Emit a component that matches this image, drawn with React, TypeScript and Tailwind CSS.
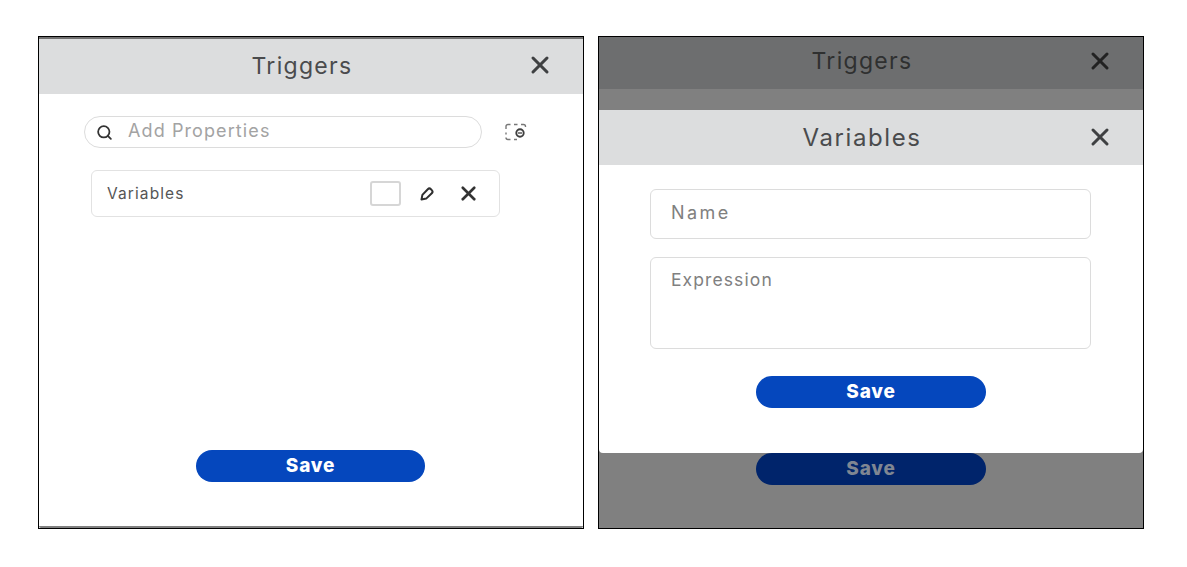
import { Search, X } from "lucide-react";

const font = { fontFamily: "Inter, 'Noto Sans', sans-serif" };

function ScanIcon() {
  return (
    <svg width="24" height="18" viewBox="0 0 24 18" fill="none">
      <path d="M2 6V3.500A2 2 0 0 1 4 1.500h2.500M10 1.500h3.500M17 1.500h2.500a2 2 0 0 1 2 2V4M2 9.500v2M2 14.500a2 2 0 0 0 2 2h2.500M10 16.500h3" stroke="#777" strokeWidth="1.400" />
      <circle cx="16" cy="10" r="3.700" stroke="#3f3f3f" strokeWidth="1.900" />
      <path d="M14 10h4" stroke="#3f3f3f" strokeWidth="1.300" />
    </svg>
  );
}

function PencilIcon() {
  return (
    <svg width="15" height="15" viewBox="0 0 15 15" fill="none">
      <path d="M1.500 13.500l.9-4.600 5.400-5.700a2.200 2.200 0 0 1 3.100 0l.9.900a2.200 2.200 0 0 1 0 3.100l-5.600 5.400-4.700.9z" stroke="#2f2f2f" strokeWidth="2" strokeLinejoin="round" />
    </svg>
  );
}

function Header({ title, dark, wide }: { title: string; dark?: boolean; wide?: boolean }) {
  return (
    <div className={`relative flex items-center justify-center pr-[18px] ${dark ? "h-[52px] bg-[#6d6e6f] pb-[4px]" : "h-[55px] bg-[#dcddde]"}`}>
      <span className={`${wide ? "text-[24px] tracking-[1.6px]" : "text-[23px] tracking-[1.3px]"} ${dark ? "text-[#2f3030]" : "text-[#4a4b4d]"}`}>{title}</span>
      <X className={`absolute right-[29px] ${dark ? "text-[#222] top-[10px]" : wide ? "top-[13px] text-[#3f4042]" : "top-[12px] text-[#3f4042]"}`} size={28} strokeWidth={2.6} />
    </div>
  );
}

export default function App() {
  return (
    <div className="flex h-[567px] w-[1187px] gap-[14px] bg-white pl-[38px] pt-[36px]" style={font}>
      {/* left panel */}
      <div className="flex h-[493px] w-[546px] flex-col border border-black bg-white">
        <div className="h-[2px] bg-[#707070]" />
        <Header title="Triggers" />
        <div className="flex items-center pl-[45px] pt-[22px]">
          <div className="flex h-[32px] w-[398px] items-center rounded-full border border-[#dcdcdc] pl-[11px]">
            <Search size={17} strokeWidth={2.5} className="text-[#333]" />
            <span className="ml-[15px] pb-[3px] text-[18px] tracking-[1.1px] text-[#a3a3a3]">Add Properties</span>
          </div>
          <div className="ml-[22px]">
            <ScanIcon />
          </div>
        </div>
        <div className="ml-[52px] mt-[22px] flex h-[47px] w-[409px] items-center rounded-[6px] border border-[#e2e2e2] pl-[15px]">
          <span className="w-[263px] text-[15.500px] tracking-[1.100px] text-[#555]">Variables</span>
          <div className="h-[25px] w-[31px] rounded-[3px] border-2 border-[#d6d6d6]" />
          <div className="ml-[19px]">
            <PencilIcon />
          </div>
          <X className="ml-[22px] text-[#333]" size={23} strokeWidth={2.8} />
        </div>
        <div className="ml-[157px] mt-[233px] flex h-[32px] w-[229px] items-center justify-center rounded-full bg-[#0547bd] pt-[1px] text-[19px] font-extrabold tracking-[0.8px] text-white">
          Save
        </div>
        <div className="mt-auto h-[2px] rounded-b-[3px] bg-[#808080]" />
      </div>

      {/* right panel */}
      <div className="relative flex h-[493px] w-[546px] flex-col border border-black bg-[#808080]">
        <Header title="Triggers" dark />
        <div className="ml-[157px] mt-[364px] flex h-[32px] w-[230px] items-center justify-center rounded-full bg-[#00246b] pt-[1px] text-[19px] font-extrabold tracking-[0.8px] text-[#7f8692]">
          Save
        </div>
        {/* modal over the dimmed panel */}
        <div className="absolute left-0 right-0 top-[73px] h-[343px] rounded-b-[4px] bg-white">
          <Header title="Variables" wide />
          <div className="flex flex-col items-start pl-[51px] pt-[24px]">
            <div className="flex h-[50px] w-[441px] items-center rounded-[6px] border border-[#dcdcdc] pb-[4px] pl-[20px] text-[18px] tracking-[2.400px] text-[#808080]">
              Name
            </div>
            <div className="mt-[18px] h-[92px] w-[441px] rounded-[6px] border border-[#dcdcdc] pl-[20px] pt-[9px] text-[17.500px] tracking-[1.100px] text-[#808080]">
              Expression
            </div>
            <div className="ml-[106px] mt-[27px] flex h-[32px] w-[230px] items-center justify-center rounded-full bg-[#0547bd] pt-[1px] text-[19px] font-extrabold tracking-[0.8px] text-white">
              Save
            </div>
          </div>
        </div>
      </div>
    </div>
  );
}
